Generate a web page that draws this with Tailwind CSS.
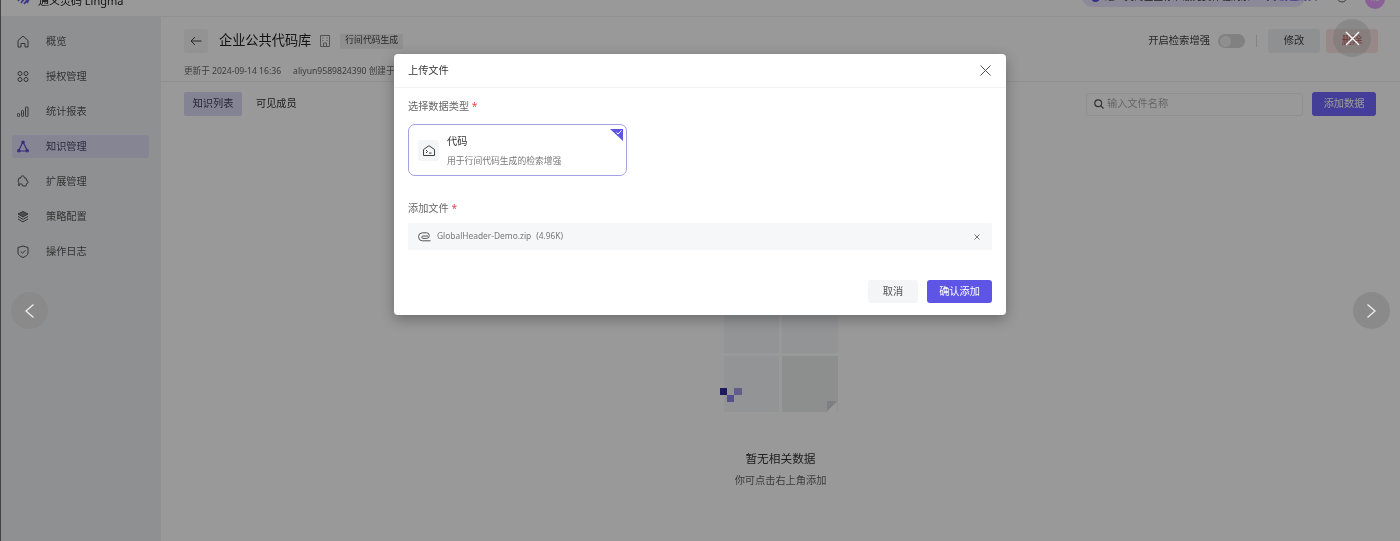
<!doctype html>
<html lang="zh"><head><meta charset="utf-8"><script src="https://cdn.jsdelivr.net/npm/@tailwindcss/browser@4"></script></head>
<body class="m-0">
<div class="relative w-[1400px] h-[541px] overflow-hidden bg-white flex flex-col blur-[0.35px] font-['Noto_Sans','Noto_Sans_CJK_SC',sans-serif] text-[#333]">
  <!-- top bar -->
  <header class="relative z-10 h-[17px] shrink-0 overflow-hidden flex items-end justify-between bg-white border-b border-[#f0f0f0]">
    <div class="flex items-center gap-[6px] pl-[17px] h-[28px] mb-[2px]">
      <svg width="15" height="14" viewBox="0 0 15 14" fill="none" stroke="#6a5fe0" stroke-width="1.800"><path d="M1 8 5 3l2 3-3 4M7 11l4-5-2-3 5-1-4 8"/></svg>
      <span class="text-[11px] text-[#222] leading-none">通义灵码 Lingma</span>
    </div>
    <div class="flex items-center h-[28px] mb-[5px] pr-[15px]">
      <div class="w-[223px] h-[20px] rounded-full bg-[#e9e5ff] flex items-center gap-[5px] pl-[9px] text-[9.700px] whitespace-nowrap">
        <span class="w-[9px] h-[9px] rounded-full bg-[#5b50e0] shrink-0"></span>
        <span>通义灵码企业标准版免费体验剩余 20 天 <span class="text-[#6a5fe0]">前往购买</span></span>
      </div>
      <svg class="ml-[31px]" width="12" height="12" viewBox="0 0 12 12" fill="none" stroke="#666"><circle cx="6" cy="6" r="5"/></svg>
      <div class="ml-[17px] mt-[4px] w-[20px] h-[20px] rounded-full bg-[#e8a0ff] text-[7px] text-white flex items-center justify-center">RC</div>
    </div>
  </header>

  <div class="flex flex-1 min-h-0">
    <!-- sidebar -->
    <aside class="w-[161px] shrink-0 bg-[#eff1f2] pt-[13px] pl-[12px] pr-[12px] flex flex-col gap-[12px] text-[10.200px] text-[#555]">
      <div class="h-[23px] flex items-center gap-[17px] pl-[5px]">
        <svg class="w-[12px] h-[13px]" viewBox="0 0 12 13" fill="none" stroke="#555"><path d="M1 5.500 6 1l5 4.500V12H8V8.500H4V12H1z"/></svg><span>概览</span>
      </div>
      <div class="h-[23px] flex items-center gap-[17px] pl-[5px]">
        <svg class="w-[12px] h-[13px]" viewBox="0 0 12 13" fill="none" stroke="#555"><circle cx="3" cy="3.500" r="2"/><circle cx="9" cy="3.500" r="2"/><circle cx="3" cy="9.500" r="2"/><circle cx="9" cy="9.500" r="2"/></svg><span>授权管理</span>
      </div>
      <div class="h-[23px] flex items-center gap-[17px] pl-[5px]">
        <svg class="w-[12px] h-[13px]" viewBox="0 0 12 13" fill="none" stroke="#555"><rect x=".5" y="8.500" width="2" height="3" rx=".8"/><rect x="4.500" y="5.500" width="2" height="6" rx=".8"/><rect x="8.500" y="2" width="2.500" height="9.500" rx=".8"/></svg><span>统计报表</span>
      </div>
      <div class="h-[23px] flex items-center gap-[17px] pl-[5px] rounded-[3px] bg-[#e0def6] text-[#4a4a66]">
        <svg class="w-[12px] h-[13px]" viewBox="0 0 12 13" fill="none" stroke="#5a4fd0" stroke-width="1.200"><path d="M6 2 1.500 11h9z"/><circle cx="6" cy="2.300" r="1.200"/><circle cx="1.800" cy="10.800" r="1.200"/><circle cx="10.200" cy="10.800" r="1.200"/></svg><span>知识管理</span>
      </div>
      <div class="h-[23px] flex items-center gap-[17px] pl-[5px]">
        <svg class="w-[12px] h-[13px]" viewBox="0 0 12 13" fill="none" stroke="#555"><path d="M4 3V2.500a1.700 1.700 0 0 1 3.400 0V3H9l.5 2.500a1.600 1.600 0 0 1 0 3.200L9 11H5.500v-.6a1.600 1.600 0 0 0-3.200 0v.6L1 9.500a1.600 1.600 0 0 0 0-3L2 3z"/></svg><span>扩展管理</span>
      </div>
      <div class="h-[23px] flex items-center gap-[17px] pl-[5px]">
        <svg class="w-[12px] h-[13px]" viewBox="0 0 12 13" fill="none" stroke="#555"><path d="M6 1.500 11 4 6 6.800 1 4z" fill="#888"/><path d="M1 6.500 6 9.300l5-2.800M1 9l5 2.800L11 9"/></svg><span>策略配置</span>
      </div>
      <div class="h-[23px] flex items-center gap-[17px] pl-[5px]">
        <svg class="w-[12px] h-[13px]" viewBox="0 0 12 13" fill="none" stroke="#555"><path d="M1 2.500 6 1l5 1.500V8c0 2-2.500 3.500-5 4.500C3.500 11.500 1 10 1 8z"/><path d="m3.800 6.500 1.700 1.700 2.800-2.800"/></svg><span>操作日志</span>
      </div>
    </aside>

    <!-- main -->
    <main class="flex-1 min-w-0 flex flex-col">
      <div class="h-[65px] shrink-0 border-b border-[#eee] pl-[23px] pr-[22px] pt-[12px]">
        <div class="flex items-center h-[24px]">
          <div class="w-[24px] h-[24px] rounded-[3px] bg-[#f5f5f5] flex items-center justify-center">
            <svg width="12" height="10" viewBox="0 0 12 10" fill="none" stroke="#444"><path d="M11.500 5H1M5 1 1 5l4 4"/></svg>
          </div>
          <h1 class="ml-[11px] text-[13.200px] leading-none font-normal text-[#222]">企业公共代码库</h1>
          <svg class="ml-[9px]" width="10" height="12" viewBox="0 0 10 12" fill="none" stroke="#888"><path d="M.5.500h9v11h-9zM3.500 3h-1M7.500 3h-1M3.500 5.500h-1M7.500 5.500h-1M3.500 11.500V8h3v3.500"/></svg>
          <span class="ml-[10px] h-[15px] px-[5px] rounded-[2px] bg-[#eeeeee] text-[8.800px] flex items-center text-[#444]">行间代码生成</span>
          <span class="ml-auto text-[10.300px] text-[#444]">开启检索增强</span>
          <span class="ml-[8px] w-[27px] h-[14px] rounded-full bg-[#d8d8d8] flex items-center pl-[2px]"><span class="w-[11px] h-[11px] rounded-full bg-[#eee]"></span></span>
          <span class="ml-[11px] w-px h-[12px] bg-[#ddd]"></span>
          <span class="ml-[11px] w-[52px] h-[24px] rounded-[3px] bg-[#eef0f3] text-[10.300px] text-[#444] flex items-center justify-center">修改</span>
          <span class="ml-[6px] w-[52px] h-[24px] rounded-[3px] bg-[#fbe4e3] text-[10.300px] text-[#c0322f] flex items-center justify-center">删除</span>
        </div>
        <div class="mt-[12px] text-[8.600px] leading-[12px] text-[#666] whitespace-nowrap"><span>更新于 2024-09-14 16:36</span><span class="ml-[12px]">aliyun9589824390 创建于 2024-09-14 16:36</span></div>
      </div>
      <div class="flex items-center pl-[23px] pr-[24px] pt-[10px]">
        <span class="w-[58px] h-[24px] rounded-[2px] bg-[#dddbf5] text-[10.200px] text-[#40405c] flex items-center justify-center">知识列表</span>
        <span class="ml-[14px] text-[10.200px] text-[#333]">可见成员</span>
        <div class="ml-auto w-[217px] h-[23px] rounded-[3px] border border-[#eee] flex items-center gap-[3px] pl-[7px] text-[10.200px] text-[#aaa]">
          <svg width="10" height="10" viewBox="0 0 10 10" fill="none" stroke="#555" stroke-width="1.200"><circle cx="4.200" cy="4.200" r="3.400"/><path d="m6.800 6.800 2.700 2.700"/></svg>
          <span>输入文件名称</span>
        </div>
        <span class="ml-[9px] w-[64px] h-[24px] rounded-[3px] bg-[#7268ff] text-[10.200px] text-white flex items-center justify-center">添加数据</span>
      </div>
      <!-- empty state -->
      <div class="flex flex-col items-center mt-[198px]">
        <div class="relative w-[114px] h-[98px] grid grid-cols-2 gap-[3px]">
          <div class="bg-[#f6f7f8] h-[39px]"></div>
          <div class="bg-[#f6f7f8] h-[39px]"></div>
          <div class="bg-[#f6f7f8] h-[56px]"></div>
          <div class="bg-[#eceded] h-[56px] relative"><span class="absolute right-0 bottom-0 w-[11px] h-[11px] bg-[#d2d4d6] [clip-path:polygon(100%_0,0_100%,0_0)]"></span><span class="absolute right-0 bottom-0 w-[11px] h-[11px] bg-white [clip-path:polygon(100%_0,100%_100%,0_100%)]"></span></div>
          <span class="absolute left-[-4px] top-[74px] w-[7px] h-[7px] bg-[#332e9c]"></span>
          <span class="absolute left-[3px] top-[81px] w-[7px] h-[7px] bg-[#8d86e6]"></span>
          <span class="absolute left-[10px] top-[74px] w-[8px] h-[7px] bg-[#a29ce8]"></span>
        </div>
        <p class="mt-[38px] text-[11.700px] leading-[16px] text-[#333]">暂无相关数据</p>
        <p class="mt-[7px] text-[10.200px] leading-[14px] text-[#666]">你可点击右上角添加</p>
      </div>
    </main>
  </div>

  <!-- mask -->
  <div class="absolute inset-0 z-20 bg-black/40 border-l border-[#444]"></div>

  <!-- viewer controls -->
  <button class="absolute z-30 left-[11px] top-[292px] w-[37px] h-[37px] rounded-full bg-[#8a8a8a] flex items-center justify-center">
    <svg width="11" height="16" viewBox="0 0 11 16" fill="none" stroke="#eee" stroke-width="1.300"><path d="M9.500 1.500 2 8l7.500 6.500"/></svg>
  </button>
  <button class="absolute z-30 left-[1352.500px] top-[292px] w-[37px] h-[37px] rounded-full bg-[#8a8a8a] flex items-center justify-center">
    <svg width="11" height="16" viewBox="0 0 11 16" fill="none" stroke="#eee" stroke-width="1.300"><path d="M1.500 1.500 9 8l-7.500 6.500"/></svg>
  </button>
  <button class="absolute z-30 left-[1333px] top-[19px] w-[38px] h-[38px] rounded-full bg-[#666]/30 flex items-center justify-center">
    <svg width="15" height="15" viewBox="0 0 15 15" fill="none" stroke="#fff" stroke-width="1.400"><path d="m1 1 13 13M14 1 1 14"/></svg>
  </button>

  <!-- dialog -->
  <section class="absolute z-30 left-[394px] top-[54px] w-[612px] h-[261px] bg-white rounded-[4px] shadow-[0_4px_14px_rgba(0,0,0,0.3)] flex flex-col">
    <div class="h-[34px] shrink-0 border-b border-[#f2f2f2] flex items-center justify-between pl-[14px] pr-[15px]">
      <span class="text-[10.200px] text-[#333]">上传文件</span>
      <svg width="11" height="11" viewBox="0 0 11 11" fill="none" stroke="#555"><path d="m.5.500 10 10M10.500.500l-10 10"/></svg>
    </div>
    <div class="flex-1 pl-[14px] pr-[14px] pt-[11px] flex flex-col">
      <label class="text-[10.200px] leading-[14px] text-[#666]">选择数据类型 <span class="text-[#e5484d]">*</span></label>
      <div class="relative mt-[11px] w-[219px] h-[52px] rounded-[7px] border border-[#a5a0e6] flex items-center pl-[9px]">
        <span class="w-[21px] h-[21px] rounded-[3px] bg-[#f4f5f7] flex items-center justify-center">
          <svg width="12" height="11" viewBox="0 0 12 11" fill="none" stroke="#444"><path d="M.5 4.500 6 .700l5.500 3.800v6H.5z"/><path d="m3 5 1.500 1.500L3 8M6 8h2.500"/></svg>
        </span>
        <div class="ml-[8px]">
          <p class="text-[10.200px] leading-[14px] text-[#333]">代码</p>
          <p class="mt-[7px] text-[8.800px] leading-[12px] text-[#777]">用于行间代码生成的检索增强</p>
        </div>
        <span class="absolute right-[3px] top-[4px] w-[13px] h-[12px] bg-[#5e55e0] [clip-path:polygon(0_0,100%_0,100%_100%)]"></span>
        <svg class="absolute right-[4px] top-[5px]" width="6" height="5" viewBox="0 0 6 5" fill="none" stroke="#fff"><path d="m.5 2.500 1.500 1.500 3.500-3.500"/></svg>
      </div>
      <label class="mt-[25px] text-[10.200px] leading-[14px] text-[#666]">添加文件 <span class="text-[#e5484d]">*</span></label>
      <div class="mt-[8px] h-[27px] w-[584px] rounded-[2px] bg-[#f6f7f8] flex items-center pl-[10px] pr-[12px] text-[8.400px] text-[#777]">
        <svg width="13" height="10" viewBox="0 0 13 10" fill="none" stroke="#555"><path d="M12.500 8.800H4.500a4 4 0 0 1 0-8h4a2.800 2.800 0 0 1 0 5.600H5a1.200 1.200 0 0 1 0-2.400h5"/></svg>
        <span class="ml-[6px]">GlobalHeader-Demo.zip</span><span class="ml-[5px]">(4.96K)</span>
        <svg class="ml-auto" width="6" height="6" viewBox="0 0 6 6" fill="none" stroke="#777"><path d="m.5.500 5 5M5.500.500l-5 5"/></svg>
      </div>
      <div class="mt-[30px] flex justify-end gap-[9px]">
        <span class="w-[50px] h-[23px] rounded-[3px] bg-[#f4f5f6] text-[10.200px] text-[#555] flex items-center justify-center">取消</span>
        <span class="w-[65px] h-[23px] rounded-[3px] bg-[#5e55e6] text-[10.200px] text-white flex items-center justify-center">确认添加</span>
      </div>
    </div>
  </section>
</div>
</body></html>
